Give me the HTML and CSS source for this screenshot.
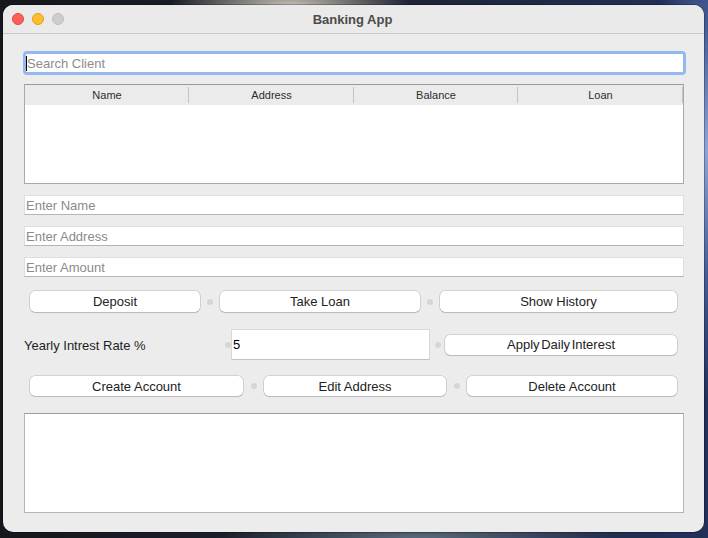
FILE: index.html
```html
<!DOCTYPE html>
<html>
<head>
<meta charset="utf-8">
<title>Banking App</title>
<link rel="stylesheet" href="styles.css">
</head>
<body>
<div class="desktop">
  <div class="window">
    <div class="titlebar">
      <div class="lights">
        <span class="light red"></span>
        <span class="light yellow"></span>
        <span class="light gray"></span>
      </div>
      <div class="title">Banking App</div>
    </div>
    <div class="content">
      <div class="search"><span class="caret"></span><span class="ph">Search Client</span></div>
      <div class="table">
        <div class="thead">
          <div class="th">Name</div>
          <div class="th">Address</div>
          <div class="th">Balance</div>
          <div class="th last">Loan</div>
        </div>
      </div>
      <div class="entry first">Enter Name</div>
      <div class="entry">Enter Address</div>
      <div class="entry">Enter Amount</div>

      <div class="row row1">
        <div class="btn">Deposit</div>
        <div class="sep"><span class="dot"></span></div>
        <div class="btn">Take Loan</div>
        <div class="sep"><span class="dot"></span></div>
        <div class="btn">Show History</div>
      </div>

      <div class="row row2">
        <div class="label">Yearly Intrest Rate %</div>
        <div class="sep"><span class="dot"></span></div>
        <div class="rate">5</div>
        <div class="sep"><span class="dot"></span></div>
        <div class="btn apply">Apply Daily Interest</div>
      </div>

      <div class="row row3">
        <div class="btn">Create Account</div>
        <div class="sep"><span class="dot"></span></div>
        <div class="btn">Edit Address</div>
        <div class="sep"><span class="dot"></span></div>
        <div class="btn">Delete Account</div>
      </div>

      <div class="output"></div>
    </div>
  </div>
</div>
</body>
</html>
```

FILE: styles.css
```css
html, body {
  margin: 0;
  padding: 0;
  width: 708px;
  height: 538px;
  overflow: hidden;
}

.desktop {
  width: 708px;
  height: 538px;
  padding: 5px 4px 6px 3px;
  box-sizing: border-box;
  background:
    radial-gradient(ellipse 120px 30px at 290px 6px, #c9c3b6 0%, rgba(201,195,182,0) 100%),
    radial-gradient(ellipse 60px 250px at 708px 150px, #8ea6d8 0%, rgba(90,120,190,0.6) 50%, rgba(30,40,80,0) 100%),
    radial-gradient(ellipse 200px 20px at 420px 538px, #5b6b7c 0%, rgba(40,50,70,0) 100%),
    linear-gradient(90deg, #15171c 0%, #1d2230 50%, #22305a 100%);
  font-family: "Liberation Sans", Arial, sans-serif;
}

.window {
  width: 701px;
  height: 527px;
  background: #ececec;
  border-radius: 10px;
  overflow: hidden;
  display: flex;
  flex-direction: column;
  box-shadow: 0 0 0 0.5px rgba(0,0,0,0.5);
}

.titlebar {
  height: 28px;
  flex: none;
  border-bottom: 1px solid #c8c8c8;
  background: #eaeaea;
  position: relative;
  display: flex;
  align-items: center;
  justify-content: center;
}

.lights {
  position: absolute;
  left: 9px;
  top: 8px;
  display: flex;
  gap: 8px;
}

.light {
  width: 12px;
  height: 12px;
  border-radius: 50%;
  box-sizing: border-box;
}
.light.red { background: #fe5f57; border: 0.5px solid #e2463f; }
.light.yellow { background: #febc2e; border: 0.5px solid #e1a116; }
.light.gray { background: #cdcdcd; border: 0.5px solid #bdbdbd; }

.title {
  font-weight: bold;
  font-size: 13px;
  color: #4b4b4b;
  margin-left: -2px;
}

.content {
  flex: 1;
  padding: 17px 20px 0 21px;
  display: flex;
  flex-direction: column;
}

.search {
  height: 24px;
  box-sizing: border-box;
  margin: 0 -2px 0 -1px;
  border: 3px solid #93b9ee;
  border-radius: 4px;
  background: #fff;
  display: flex;
  align-items: center;
  font-size: 13px;
}
.caret {
  width: 1px;
  height: 15px;
  background: #000;
}
.ph {
  color: #8c8c8c;
}

.table {
  margin-top: 9px;
  height: 100px;
  box-sizing: border-box;
  border: 1px solid #a9a9a9;
  border-top-color: #9a9a9a;
  background: #fff;
}
.thead {
  height: 20px;
  background: #ebebeb;
  display: grid;
  grid-template-columns: 164px 165px 164px 1fr;
}
.th {
  font-size: 11px;
  color: #2d2d2d;
  display: flex;
  align-items: center;
  justify-content: center;
  position: relative;
}
.th::after {
  content: "";
  position: absolute;
  right: 0;
  top: 2px;
  width: 1px;
  height: 16px;
  background: #c4c4c4;
}

.entry {
  margin-top: 11px;
  height: 20px;
  box-sizing: border-box;
  background: #fff;
  border: 1px solid #dedede;
  border-bottom-color: #b5b5b5;
  font-size: 13px;
  color: #8a8a8a;
  padding-left: 1px;
  display: flex;
  align-items: center;
}

.row {
  display: grid;
  align-items: center;
}
.row1 {
  margin-top: 14px;
  height: 21px;
  padding: 0 7px 0 6px;
  grid-template-columns: 170px 20px 200px 20px 1fr;
}
.row2 {
  margin-top: 17px;
  height: 31px;
  padding: 0 7px 0 0;
  grid-template-columns: 200px 7px 199px 15px 1fr;
}
.row3 {
  margin-top: 16px;
  height: 20px;
  padding: 0 7px 0 6px;
  grid-template-columns: 213px 21px 182px 21px 1fr;
}

.btn {
  height: 20px;
  background: #fff;
  border-radius: 5px;
  box-shadow: 0 0 0 0.5px rgba(0,0,0,0.22), 0 1px 1px rgba(0,0,0,0.12);
  font-size: 13px;
  color: #222;
  display: flex;
  align-items: center;
  justify-content: center;
}
.row1 .btn { height: 21px; }
.apply { word-spacing: -2px; }

.sep {
  display: flex;
  align-items: center;
  justify-content: center;
}
.dot {
  width: 6px;
  height: 6px;
  border-radius: 50%;
  background: #d6d6d6;
}

.label {
  font-size: 13px;
  color: #1e1e1e;
  padding-top: 2px;
}

.rate {
  height: 31px;
  box-sizing: border-box;
  background: #fff;
  border: 1px solid #d8d8d8;
  border-bottom-color: #c4c4c4;
  font-size: 13px;
  color: #000;
  padding-left: 1px;
  display: flex;
  align-items: center;
}

.output {
  margin-top: 17px;
  height: 100px;
  box-sizing: border-box;
  background: #fff;
  border: 1px solid #b4b4b4;
  border-top-color: #9c9c9c;
}
```
